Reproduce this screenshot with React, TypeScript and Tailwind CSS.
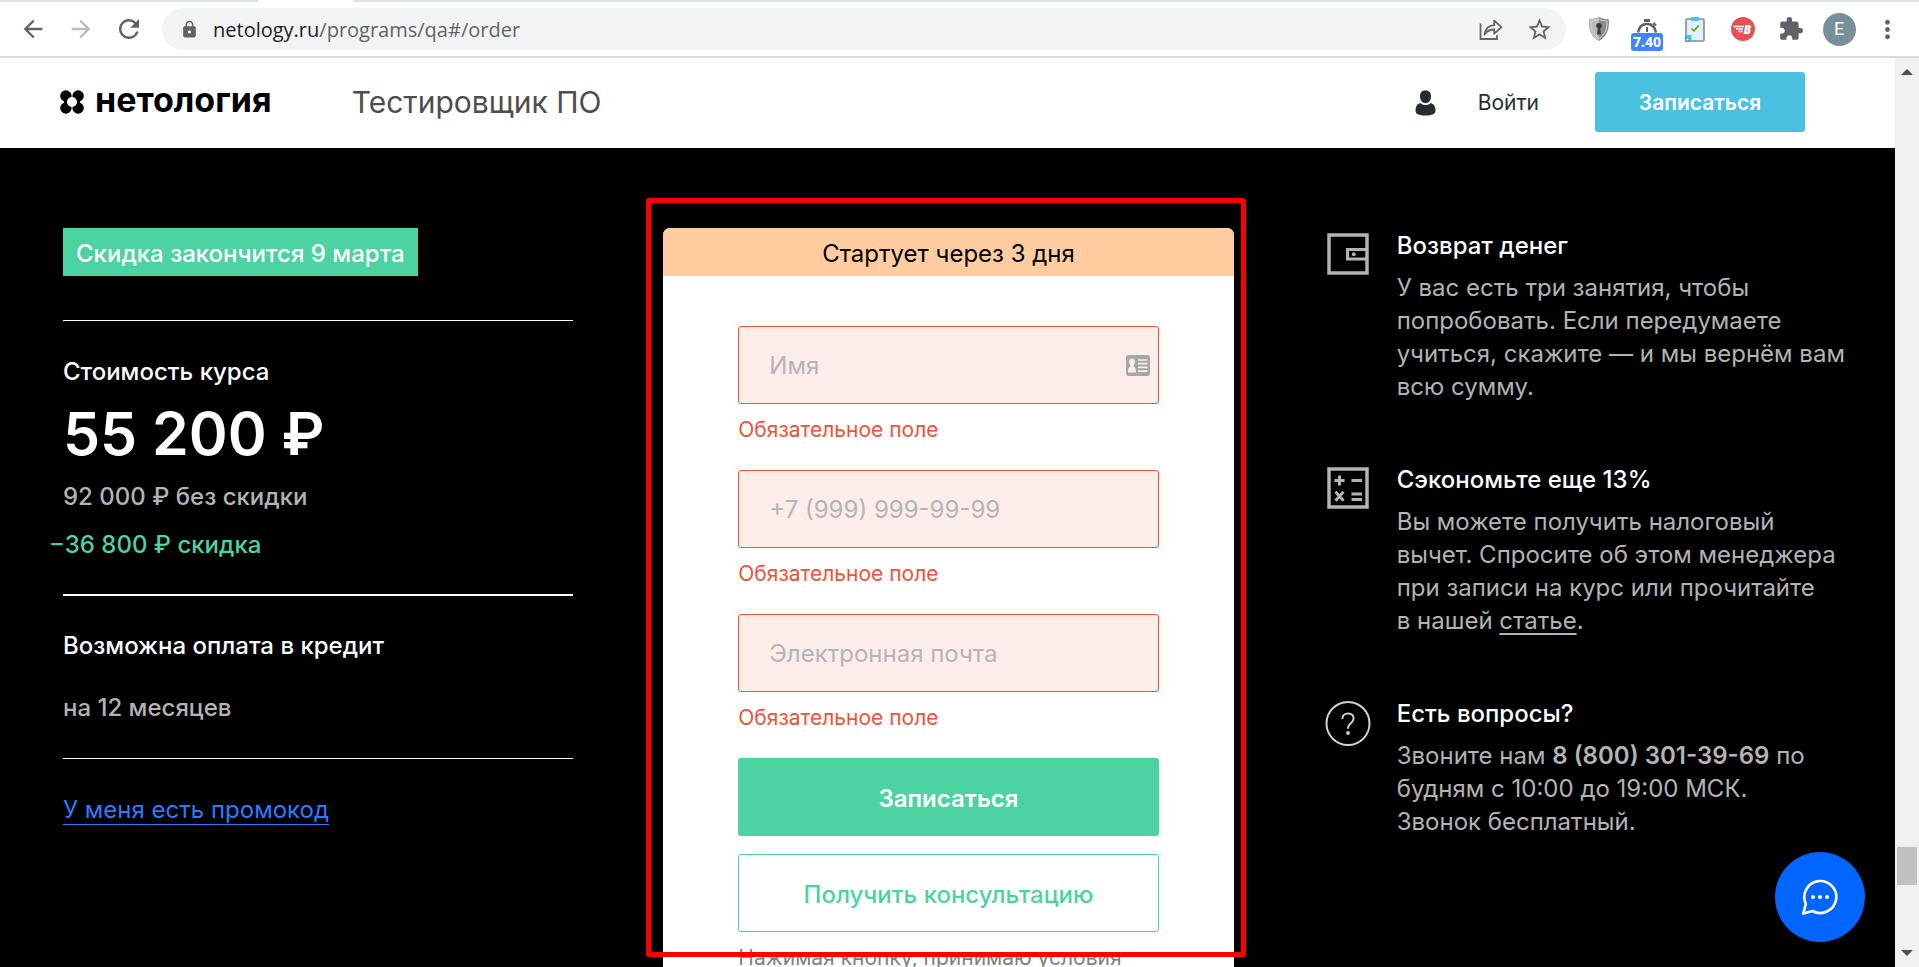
import type { ReactNode } from "react";
import {
  MdArrowBack,
  MdArrowForward,
  MdExtension,
  MdLock,
  MdMoreVert,
  MdRefresh,
  MdStarBorder,
} from "react-icons/md";

function ShareIcon() {
  return (
    <svg width="24" height="24" viewBox="0 0 24 24" fill="none" stroke="#5f6368" strokeWidth="1.8">
      <path d="M1.500 6.500V22H18v-4" />
      <path d="M5.500 17.500c.6-5.500 4.200-8.800 9.700-9.300V3.600l7.300 6.600-7.300 6.500v-4.200c-4.200 0-7.500 1.600-9.700 5z" strokeLinejoin="round" />
    </svg>
  );
}

function ShieldIcon() {
  return (
    <svg width="22" height="26" viewBox="0 0 22 26">
      <path d="M11 1c3.500 1.800 6.700 2.300 10 2.200.4 9.800-1.700 17-10 21.800C2.700 20.200.6 13 1 3.200 4.300 3.300 7.500 2.800 11 1z" fill="#8b8b8b" />
      <path d="M11 1c-3.500 1.800-6.700 2.300-10 2.200C.6 13 2.700 20.200 11 25z" fill="#b9b9b9" />
      <path d="M11 3.200c2.700 1.300 5.200 1.800 8 1.800.2 7.900-1.400 13.700-8 17.700C4.400 18.700 2.800 12.900 3 5c2.800 0 5.300-.5 8-1.800z" fill="none" stroke="#d8d8d8" />
      <circle cx="11" cy="9.800" r="2.800" fill="#3c3c3c" />
      <path d="M10 11.500h2l1 7H9z" fill="#3c3c3c" />
    </svg>
  );
}

function StopwatchIcon() {
  return (
    <svg width="22" height="14" viewBox="0 0 22 14" fill="none" stroke="#5f6368">
      <path d="M8 1.500h6" strokeWidth="3" />
      <path d="M2 13.500c1-5.600 4.600-8.500 9-8.500s8 2.900 9 8.500" strokeWidth="2.400" />
      <path d="M11 8v5" strokeWidth="2" />
      <path d="M17.500 4l2.500 2.500" strokeWidth="2.400" />
    </svg>
  );
}

function ClipboardIcon() {
  return (
    <svg width="20" height="25" viewBox="0 0 20 25">
      <rect x="1" y="2" width="18" height="22" rx="1" fill="#e6edfc" stroke="#78909c" strokeWidth="1.600" />
      <path d="M6 0h8v4H6z" fill="#40c4f5" />
      <path d="M6.500 11.500l2.400 2.400 5-5.500" fill="none" stroke="#5cae1c" strokeWidth="1.600" />
      <path d="M1 18h5.500v6H1z" fill="#40c4f5" />
      <path d="M0 18l6.500 7H0z" fill="#78909c" />
      <circle cx="2.500" cy="22.500" r="1" fill="#fff" />
    </svg>
  );
}

function CourierIcon() {
  return (
    <svg width="24" height="24" viewBox="0 0 24 24">
      <circle cx="12" cy="12" r="12" fill="#e65055" />
      <path d="M2.500 9.500H13M5 12h7M7.500 14.500h4" stroke="#fff" strokeWidth="1.700" />
      <text x="12.500" y="16.500" fontSize="12" fontWeight="800" fontStyle="italic" fontFamily="Open Sans, sans-serif" fill="#fff">B</text>
    </svg>
  );
}

function LogoMark() {
  return (
    <svg width="24" height="24" viewBox="0 0 24 24" fill="#000">
      <circle cx="5.900" cy="6" r="5.700" />
      <circle cx="18.100" cy="6" r="5.700" />
      <circle cx="5.900" cy="18" r="5.700" />
      <circle cx="18.100" cy="18" r="5.700" />
      <path d="M4 9.500h3v5H4zM17 9.500h3v5h-3z" />
      <path d="M0 10.500L3.200 12 0 13.500zM24 10.500L20.800 12l3.200 1.500z" fill="#fff" />
      <circle cx="12" cy="12" r="5" fill="#fff" />
    </svg>
  );
}

function PersonIcon() {
  return (
    <svg width="21" height="26" viewBox="0 0 21 26" fill="#272c30">
      <path d="M10.500.5c3.600 0 5.500 2 5.500 5.800 0 4-2.200 7-5.500 7S5 10.300 5 6.300C5 2.500 6.900.5 10.500.5z" />
      <path d="M5.300 13c2.800 2.700 7.600 2.700 10.400 0 3.300.8 4.800 3.200 4.800 7.500 0 3.600-3.200 5-10 5s-10-1.400-10-5c0-4.300 1.500-6.700 4.800-7.500z" />
    </svg>
  );
}

function ContactCardIcon() {
  return (
    <svg width="24" height="21" viewBox="0 0 24 21">
      <rect width="24" height="21" rx="3" fill="#a6a6a6" />
      <path d="M6 3.500c1.900 0 2.900 1.300 2.900 3.200 0 1.600-.6 2.700-1.300 3.300v1.600c1.700.7 2.400 2.200 2.400 5.900H2c0-3.700.7-5.200 2.400-5.900V10c-.7-.6-1.300-1.700-1.300-3.300C3.100 4.800 4.100 3.500 6 3.500z" fill="#f4efee" />
      <path d="M12 5h9.500M12 8.700h9.500M12 12.400h9.500M12 16.100h9.500" stroke="#f4efee" strokeWidth="1.700" />
    </svg>
  );
}

function WalletIcon() {
  return (
    <svg width="42" height="42" viewBox="0 0 42 42" fill="none" stroke="#b3b3b3" strokeWidth="3.500">
      <rect x="2" y="2" width="38" height="38" />
      <path d="M40 16.500H20.500v9.500H40" strokeWidth="3" />
      <circle cx="26.800" cy="21.200" r="2" fill="#b3b3b3" stroke="none" />
    </svg>
  );
}

function CalculatorIcon() {
  return (
    <svg width="42" height="42" viewBox="0 0 42 42" fill="none" stroke="#b3b3b3" strokeWidth="3">
      <rect x="2" y="2" width="38" height="38" strokeWidth="3.500" />
      <path d="M7.500 13.500h10M12.500 8.500v10M24.500 13.500H35M24.500 27H35M24.500 32.500H35" />
      <path d="M8.500 24.800l8 9M16.500 24.800l-8 9" />
    </svg>
  );
}

function QuestionIcon() {
  return (
    <svg width="46" height="46" viewBox="0 0 46 46" fill="none" stroke="#d0d0d0" strokeWidth="2">
      <circle cx="23" cy="22.500" r="21.500" />
      <path d="M17.300 18c0-3.300 2.300-5.500 5.700-5.500s5.600 2 5.600 5c0 4.800-5.600 4.800-5.600 9.500v.8" />
      <circle cx="23" cy="32" r="1.900" fill="#d0d0d0" stroke="none" />
    </svg>
  );
}

function ChatIcon() {
  return (
    <svg width="38" height="38" viewBox="0 0 38 38" fill="none" stroke="#fff" strokeWidth="2.600">
      <path d="M4.800 25.800A16 16 0 1 1 11.500 33L2.300 35.600z" strokeLinejoin="round" />
      <g fill="#fff" stroke="none">
        <circle cx="12" cy="19" r="2" />
        <circle cx="19" cy="19" r="2" />
        <circle cx="26" cy="19" r="2" />
      </g>
    </svg>
  );
}

function ToolButton({ label, children }: { label: string; children: ReactNode }) {
  return (
    <button type="button" aria-label={label} className="flex h-12 w-12 shrink-0 items-center justify-center text-[#5f6368]">
      {children}
    </button>
  );
}

function BrowserBar() {
  return (
    <div className="shrink-0 border-b-2 border-[#dadada] bg-white">
      <div className="h-0.5 bg-[#dee1e6] pl-[258px]">
        <div className="h-full w-24 bg-white" />
      </div>
      <div className="flex h-[54px] items-center pr-2 pl-[9px]">
        <ToolButton label="Назад"><MdArrowBack size={28} /></ToolButton>
        <ToolButton label="Вперёд"><MdArrowForward size={28} className="text-[#babcbe]" /></ToolButton>
        <ToolButton label="Обновить"><MdRefresh size={30} /></ToolButton>
        <div className="mx-[9px] flex h-[42px] flex-1 items-center rounded-full bg-[#f1f3f4] pr-[3px] pl-[18px]">
          <MdLock size={19} className="shrink-0 text-[#5f6368]" />
          <p className="flex-1 pt-0.5 pl-3.5 font-['Open_Sans',sans-serif] text-xl text-[#5f6368]">
            <span className="text-[#202124]">netology.ru</span>/programs/qa#/order
          </p>
          <ToolButton label="Поделиться"><ShareIcon /></ToolButton>
          <ToolButton label="В закладки"><MdStarBorder size={27} /></ToolButton>
        </div>
        <ToolButton label="Защита"><ShieldIcon /></ToolButton>
        <button type="button" aria-label="Таймер" className="flex h-12 w-12 shrink-0 flex-col items-center pt-3.5">
          <StopwatchIcon />
          <span className="flex h-[18px] items-center rounded-[3px] bg-[#4285f4] px-0.5 font-['Open_Sans',sans-serif] text-sm leading-none font-bold text-white">
            7.40
          </span>
        </button>
        <ToolButton label="Задачи"><ClipboardIcon /></ToolButton>
        <ToolButton label="Доставка"><CourierIcon /></ToolButton>
        <ToolButton label="Расширения"><MdExtension size={26} /></ToolButton>
        <ToolButton label="Профиль">
          <span className="flex h-[33px] w-[33px] items-center justify-center rounded-full bg-[#78909c] font-[Roboto,sans-serif] text-lg text-white">E</span>
        </ToolButton>
        <ToolButton label="Меню"><MdMoreVert size={29} /></ToolButton>
      </div>
    </div>
  );
}

function SiteHeader() {
  return (
    <header className="flex h-[90px] shrink-0 items-center bg-white pr-[90px] pb-0.5 pl-[60px]">
      <a href="#home" className="flex items-center gap-[11px] text-black">
        <LogoMark />
        <span className="pb-1 text-[34px] leading-9 font-bold">нетология</span>
      </a>
      <p className="ml-20 flex-1 text-3xl text-[#4d4d4d]">Тестировщик ПО</p>
      <a href="#login" className="mr-14 flex items-center gap-[42px] pt-0.5 text-[21px] text-[#272c30]">
        <PersonIcon />
        Войти
      </a>
      <button type="button" className="h-[60px] w-[210px] rounded-[3px] bg-[#4ac1e0] pt-0.5 text-[21px] font-semibold text-white">
        Записаться
      </button>
    </header>
  );
}

function Price() {
  return (
    <div className="leading-[33px] font-medium text-white">
      <p className="flex h-12 w-fit items-center bg-[#4dd2a1] px-[13px] pt-0.5">Скидка закончится 9 марта</p>
      <hr className="mt-11 border-white" />
      <p className="mt-[34px]">Стоимость курса</p>
      <p className="mt-2.5 text-[59px] leading-[72px] font-semibold">55 200 ₽</p>
      <p className="mt-2.5 text-[#b3b3b3]">92 000 ₽ без скидки</p>
      <p className="mt-[15px] -ml-3.5 text-[#4dd2a1]">−36 800 ₽ скидка</p>
      <hr className="mt-[33px] border-t-2 border-white" />
      <p className="mt-[33px]">Возможна оплата в кредит</p>
      <p className="mt-[29px] text-[#b3b3b3]">на 12 месяцев</p>
      <hr className="mt-[34px] border-white" />
      <a href="#promo" className="mt-[34px] inline-block font-normal text-[#2c7bff] underline decoration-1 underline-offset-[6px]">
        У меня есть промокод
      </a>
    </div>
  );
}

const fields = [
  { id: "name", label: "Имя", type: "text", placeholder: "Имя" },
  { id: "phone", label: "Телефон", type: "tel", placeholder: "+7 (999) 999-99-99" },
  { id: "email", label: "Электронная почта", type: "email", placeholder: "Электронная почта" },
];

function OrderForm() {
  return (
    <div className="relative">
      <form className="overflow-hidden rounded-[7px] bg-white pb-20" onSubmit={(e) => e.preventDefault()} noValidate>
        <p className="flex h-12 items-center justify-center bg-[#ffcc9f] pt-1 text-black">Стартует через 3 дня</p>
        <div className="px-[75px] pt-[50px]">
          {fields.map((field) => (
            <div key={field.id} className="mb-7">
              <div className="relative">
                <input
                  id={field.id}
                  type={field.type}
                  aria-label={field.label}
                  aria-describedby={`${field.id}-error`}
                  placeholder={field.placeholder}
                  className="block h-[78px] w-full rounded-[3px] border border-[#f0523a] bg-[#fcecea] px-[30px] outline-none placeholder:text-[#b5b5b5]"
                />
                {field.id === "name" && (
                  <span className="pointer-events-none absolute inset-y-0 right-[9px] flex items-center">
                    <ContactCardIcon />
                  </span>
                )}
              </div>
              <p id={`${field.id}-error`} className="mt-3.5 text-[21px] leading-6 text-[#f0523a]">Обязательное поле</p>
            </div>
          ))}
          <button type="submit" className="h-[78px] w-full rounded-[3px] bg-[#4dd2a1] pt-1 font-semibold text-white">
            Записаться
          </button>
          <button type="button" className="mt-[18px] h-[78px] w-full rounded-[3px] border border-[#4dd2a1] pt-1 font-medium text-[#4dd2a1]">
            Получить консультацию
          </button>
          <p className="mt-3.5 text-[21px] leading-6 text-[#808080]">Нажимая кнопку, принимаю условия</p>
        </div>
      </form>
      <div className="pointer-events-none absolute -top-[30px] -right-3 -left-[17px] h-[759px] rounded-[3px] border-[5px] border-[#ff0000]" />
    </div>
  );
}

function Benefit({ icon, title, children }: { icon: ReactNode; title: string; children: ReactNode }) {
  return (
    <article className="flex gap-[27px]">
      <div className="flex w-[43px] shrink-0 justify-center pt-1">
        <div className="shrink-0">{icon}</div>
      </div>
      <div className="leading-[33px] whitespace-nowrap text-[#b3b3b3]">
        <h3 className="mb-[9px] font-medium text-white">{title}</h3>
        <p>{children}</p>
      </div>
    </article>
  );
}

function Benefits() {
  return (
    <div className="flex flex-col gap-[60px] pt-px pl-[3px]">
      <Benefit icon={<WalletIcon />} title="Возврат денег">
        У вас есть три занятия, чтобы<br />попробовать. Если передумаете<br />учиться, скажите — и мы вернём вам<br />всю сумму.
      </Benefit>
      <Benefit icon={<CalculatorIcon />} title="Сэкономьте еще 13%">
        Вы можете получить налоговый<br />вычет. Спросите об этом менеджера<br />при записи на курс или прочитайте<br />
        в нашей <a href="#article" className="underline decoration-2 underline-offset-4">статье</a>.
      </Benefit>
      <Benefit icon={<QuestionIcon />} title="Есть вопросы?">
        Звоните нам <b className="font-semibold">8 (800) 301-39-69</b> по<br />будням с 10:00 до 19:00 МСК.<br />Звонок бесплатный.
      </Benefit>
    </div>
  );
}

function Scrollbar() {
  return (
    <div aria-hidden="true" className="flex w-6 shrink-0 flex-col items-center justify-between bg-[#f0f0f0] py-[11px]">
      <svg width="12" height="6" viewBox="0 0 12 6" fill="#505050"><path d="M0 6l6-6 6 6z" /></svg>
      <div className="flex w-full grow flex-col px-0.5">
        <div className="grow-[772]" />
        <div className="h-[38px] bg-[#c1c1c1]" />
        <div className="grow-[65]" />
      </div>
      <svg width="12" height="6" viewBox="0 0 12 6" fill="#505050"><path d="M0 0l6 6 6-6z" /></svg>
    </div>
  );
}

export default function App() {
  return (
    <div className="flex h-screen flex-col overflow-hidden font-[Inter,sans-serif] text-2xl">
      <BrowserBar />
      <div className="flex min-h-0 flex-1">
        <div className="relative flex min-w-0 flex-1 flex-col overflow-hidden bg-black">
          <SiteHeader />
          <main className="grid min-h-0 flex-1 grid-cols-[minmax(0,51fr)_minmax(0,57fr)_minmax(0,51fr)] items-start gap-[90px] pr-[61px] pl-[63px] pt-20">
            <Price />
            <OrderForm />
            <Benefits />
          </main>
          <button
            type="button"
            aria-label="Открыть чат"
            className="absolute right-[30px] bottom-[25px] flex h-[90px] w-[90px] items-center justify-center rounded-full bg-[#0066ff]"
          >
            <ChatIcon />
          </button>
        </div>
        <Scrollbar />
      </div>
    </div>
  );
}
